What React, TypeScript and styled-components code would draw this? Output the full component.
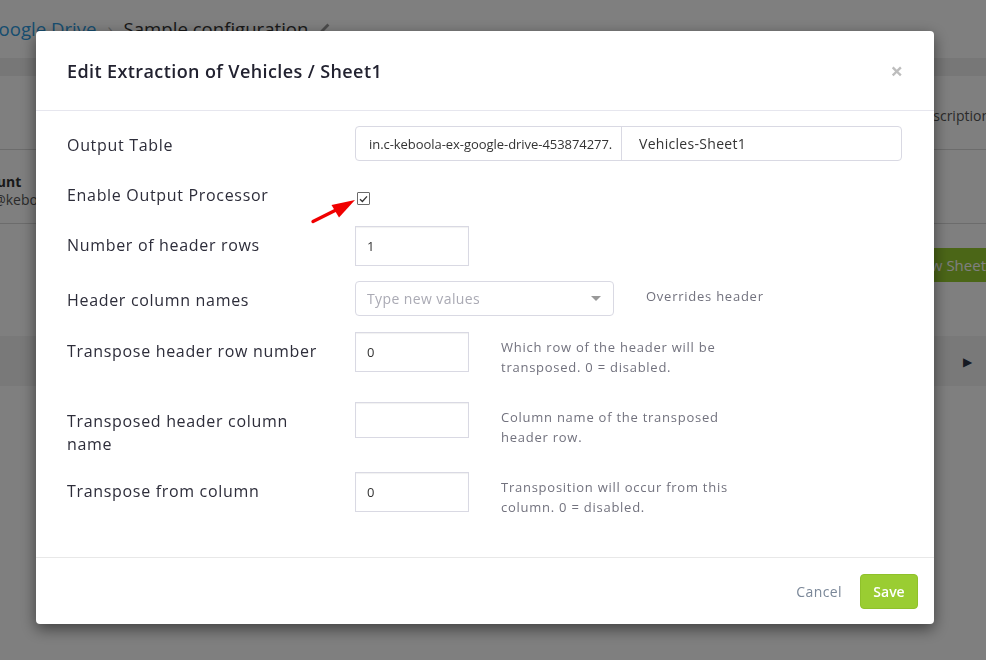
import styled, { createGlobalStyle } from 'styled-components';

const GlobalStyle = createGlobalStyle`
  html, body {
    margin: 0;
    padding: 0;
  }
  body {
    font-family: 'Open Sans', 'Liberation Sans', sans-serif;
    background: #fff;
    overflow: hidden;
  }
  * { box-sizing: border-box; }
`;

/* ---------- page behind the modal ---------- */

const Page = styled.div`
  width: 986px;
  height: 660px;
  overflow: hidden;
  background: #fff;
  color: #333;
`;

const TopBar = styled.div`
  height: 58px;
  display: flex;
  align-items: center;
  padding-bottom: 2px;
`;

const Crumbs = styled.div`
  margin-left: -15px;
  display: flex;
  align-items: center;
  gap: 11px;
  font-size: 18.6px;
  white-space: nowrap;
`;

const CrumbLink = styled.span`
  color: #2f9be0;
`;

const CrumbSep = styled.span`
  color: #bbb;
  font-size: 17px;
`;

const Band = styled.div<{ $h: number }>`
  height: ${p => p.$h}px;
  background: #eeeeee;
`;

const BgRow = styled.div<{ $h: number; $top?: number }>`
  height: ${p => p.$h}px;
  padding-top: ${p => p.$top ?? 0}px;
  border-bottom: 1px solid #d8d8d8;
  display: flex;
  align-items: center;
  justify-content: space-between;
  font-size: 14px;
  white-space: nowrap;
`;

const Account = styled.div`
  margin-left: -36px;
  display: flex;
  flex-direction: column;
  line-height: 18px;
  b { font-weight: 700; }
  span { color: #555; }
`;

const BgAction = styled.div`
  margin-right: -4px;
  color: #555;
`;

const ButtonRow = styled.div`
  height: 112px;
  padding-top: 24px;
  display: flex;
  justify-content: flex-end;
`;

const GreenBtn = styled.div`
  margin-right: -14px;
  height: 34px;
  padding: 0 14px;
  display: flex;
  align-items: center;
  background: #97cc2f;
  color: #fff;
  border-radius: 4px;
  font-size: 15px;
`;

const Collapse = styled.div`
  height: 50px;
  background: #f3f3f3;
  display: flex;
  align-items: center;
  justify-content: flex-end;
  padding-right: 14px;
  color: #2c3546;
  font-size: 12px;
`;

/* ---------- modal ---------- */

const Overlay = styled.div`
  position: fixed;
  inset: 0;
  background: rgba(0, 0, 0, 0.5);
`;

const Modal = styled.div`
  position: relative;
  width: 898px;
  margin: 31px 0 0 36px;
  background: #fff;
  border-radius: 4px;
  box-shadow: 0 5px 15px rgba(0, 0, 0, 0.5);
`;

const Header = styled.div`
  height: 80px;
  padding: 0 31px;
  display: flex;
  align-items: center;
  justify-content: space-between;
  border-bottom: 1px solid #e6e6ee;
`;

const Title = styled.h4`
  margin: 0;
  font-size: 18px;
  font-weight: 600;
  letter-spacing: 0.4px;
  color: #222230;
`;

const Close = styled.span`
  color: #bdbdbd;
  font-size: 22px;
  font-weight: 700;
  line-height: 1;
  margin-top: -2px;
`;

const Body = styled.div`
  padding: 15px 32px 30px 31px;
`;

const Row = styled.div<{ $min: number }>`
  display: flex;
  align-items: flex-start;
  min-height: ${p => p.$min}px;
  margin-bottom: 15px;
  &:last-child { margin-bottom: 0; }
`;

const Label = styled.div`
  width: 258px;
  margin-right: 30px;
  padding-top: 8px;
  font-size: 16px;
  line-height: 23px;
  letter-spacing: 0.68px;
  color: #2d2d3a;
  flex-shrink: 0;
`;

const InputGroup = styled.div`
  flex: 1;
  height: 35px;
  display: flex;
  border: 1px solid #d9d9e3;
  border-radius: 4px;
  color: #333;
`;

const Addon = styled.span`
  width: 266px;
  padding-left: 13px;
  display: flex;
  align-items: center;
  overflow: hidden;
  white-space: nowrap;
  border-right: 1px solid #d9d9e3;
  font-size: 13px;
  letter-spacing: -0.05px;
`;

const GroupInput = styled.input`
  flex: 1;
  border: 0;
  outline: none;
  padding: 0 17px;
  font: inherit;
  font-size: 14px;
  letter-spacing: 0.3px;
  color: #333;
  border-radius: 0 4px 4px 0;
  background: transparent;
`;

const Check = styled.span`
  width: 13px;
  height: 13px;
  margin: 16px 0 0 2px;
  border: 1px solid #6a6a6a;
  border-radius: 1px;
  display: flex;
  align-items: center;
  justify-content: center;
  background: #fff;
`;

const TextInput = styled.input<{ $h: number }>`
  width: 114px;
  height: ${p => p.$h}px;
  flex-shrink: 0;
  border: 1px solid #d9d9e3;
  border-radius: 0;
  padding: 0 11px;
  font: inherit;
  font-size: 13px;
  color: #333;
  outline: none;
  box-shadow: inset 0 1px 1px rgba(0, 0, 0, 0.06);
`;

const Select = styled.div`
  width: 259px;
  height: 35px;
  flex-shrink: 0;
  border: 1px solid #d9d9e3;
  border-radius: 4px;
  padding: 0 11px;
  display: flex;
  align-items: center;
  justify-content: space-between;
  font-size: 14px;
  letter-spacing: 0.4px;
  color: #aaaab4;
`;

const Caret = styled.span`
  width: 0;
  height: 0;
  border-left: 5px solid transparent;
  border-right: 5px solid transparent;
  border-top: 5px solid #999;
  margin-right: 1px;
`;

const Help = styled.div`
  margin-left: 32px;
  padding-top: 5px;
  max-width: 236px;
  font-size: 13px;
  line-height: 20px;
  letter-spacing: 0.75px;
  color: #72727e;
`;

const Footer = styled.div`
  height: 67px;
  border-top: 1px solid #e8e8e8;
  padding: 0 16px;
  display: flex;
  align-items: center;
  justify-content: flex-end;
  gap: 18px;
`;

const LinkBtn = styled.button`
  border: 0;
  background: none;
  padding: 0;
  font: inherit;
  font-size: 14px;
  color: #7a8798;
  letter-spacing: 0.4px;
`;

const SaveBtn = styled.button`
  width: 58px;
  height: 35px;
  border: 1px solid #8fc12b;
  border-radius: 4px;
  background: #9acd32;
  color: #fff;
  font: inherit;
  font-size: 14px;
  font-weight: 600;
`;

const Arrow = styled.svg`
  position: absolute;
  left: 270px;
  top: 160px;
`;

export default function App() {
  return (
    <>
      <GlobalStyle />
      <Page>
        <TopBar>
          <Crumbs>
            <CrumbLink>Google Drive</CrumbLink>
            <CrumbSep>›</CrumbSep>
            <span>Sample configuration</span>
            <svg width="12" height="12" viewBox="0 0 12 12">
              <path d="M1 11 L1.6 8.4 L8.4 1.6 L10.4 3.6 L3.6 10.4 Z" fill="#999" />
            </svg>
          </Crumbs>
        </TopBar>
        <Band $h={18} />
        <BgRow $h={74} $top={6}>
          <span />
          <BgAction>Description</BgAction>
        </BgRow>
        <BgRow $h={74} $top={8}>
          <Account>
            <b>Account</b>
            <span>john@keboola.com</span>
          </Account>
        </BgRow>
        <ButtonRow>
          <GreenBtn>New Sheet</GreenBtn>
        </ButtonRow>
        <Collapse>▶</Collapse>
      </Page>

      <Overlay>
        <Modal>
          <Header>
            <Title>Edit Extraction of Vehicles / Sheet1</Title>
            <Close>×</Close>
          </Header>
          <Body>
            <Row $min={35}>
              <Label>Output Table</Label>
              <InputGroup>
                <Addon>in.c-keboola-ex-google-drive-453874277.</Addon>
                <GroupInput readOnly value="Vehicles-Sheet1" />
              </InputGroup>
            </Row>
            <Row $min={35}>
              <Label>Enable Output Processor</Label>
              <Check>
                <svg width="9" height="8" viewBox="0 0 9 8">
                  <path d="M1 4.2 L3.4 6.5 L8 1.4" fill="none" stroke="#333" strokeWidth="1.3" />
                </svg>
              </Check>
            </Row>
            <Row $min={40}>
              <Label>Number of header rows</Label>
              <TextInput $h={40} readOnly value="1" />
            </Row>
            <Row $min={36}>
              <Label>Header column names</Label>
              <Select>
                <span>Type new values</span>
                <Caret />
              </Select>
              <Help>Overrides header</Help>
            </Row>
            <Row $min={55}>
              <Label>Transpose header row number</Label>
              <TextInput $h={40} readOnly value="0" />
              <Help>Which row of the header will be transposed. 0 = disabled.</Help>
            </Row>
            <Row $min={55}>
              <Label>Transposed header column name</Label>
              <TextInput $h={36} readOnly value="" />
              <Help>Column name of the transposed header row.</Help>
            </Row>
            <Row $min={55}>
              <Label>Transpose from column</Label>
              <TextInput $h={40} readOnly value="0" />
              <Help>Transposition will occur from this column. 0 = disabled.</Help>
            </Row>
          </Body>
          <Footer>
            <LinkBtn>Cancel</LinkBtn>
            <SaveBtn>Save</SaveBtn>
          </Footer>
          <Arrow width="55" height="40" viewBox="0 0 55 40">
            <line x1="7" y1="30.5" x2="31" y2="18.5" stroke="#f00000" strokeWidth="3.4" strokeLinecap="round" />
            <polygon points="49,9 25.5,14 33,26.5" fill="#f00000" />
          </Arrow>
        </Modal>
      </Overlay>
    </>
  );
}
